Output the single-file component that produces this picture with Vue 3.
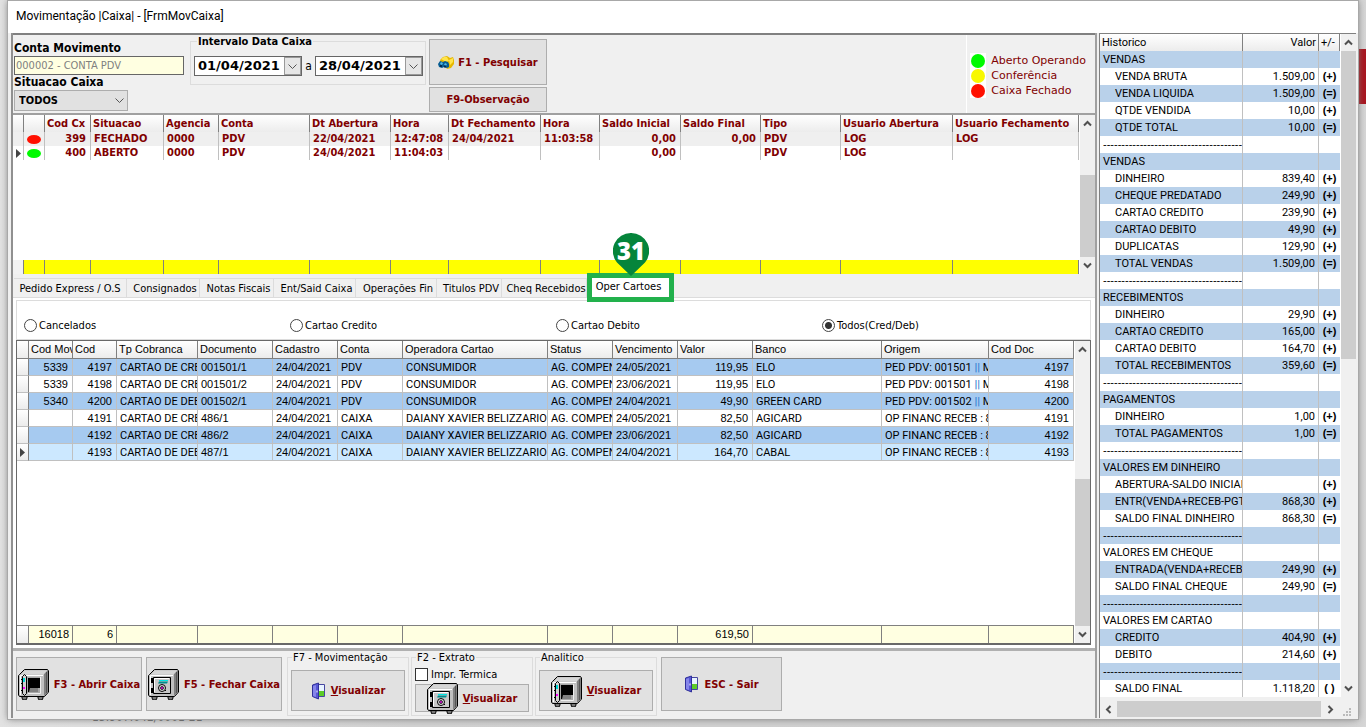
<script setup>
import { ref } from 'vue'

const situacao = ref('TODOS')
const filtro = ref('Todos(Cred/Deb)')
const impressaoTermica = ref(false)

const legenda = [
  { cor: 'verde', texto: 'Aberto Operando' },
  { cor: 'amarelo', texto: 'Conferência' },
  { cor: 'vermelho', texto: 'Caixa Fechado' }
]

const caixaCols = [
  { t: '', w: 11 },
  { t: '', w: 21 },
  { t: 'Cod Cx', w: 46, num: true },
  { t: 'Situacao', w: 73 },
  { t: 'Agencia', w: 55 },
  { t: 'Conta', w: 91 },
  { t: 'Dt Abertura', w: 81 },
  { t: 'Hora', w: 58 },
  { t: 'Dt Fechamento', w: 92 },
  { t: 'Hora', w: 59 },
  { t: 'Saldo Inicial', w: 81, num: true },
  { t: 'Saldo Final', w: 80, num: true },
  { t: 'Tipo', w: 80 },
  { t: 'Usuario Abertura', w: 112 },
  { t: 'Usuario Fechamento', w: 126 }
]
const caixas = [
  { cor: 'vermelho', atual: false, c: ['399', 'FECHADO', '0000', 'PDV', '22/04/2021', '12:47:08', '24/04/2021', '11:03:58', '0,00', '0,00', 'PDV', 'LOG', 'LOG'] },
  { cor: 'verde', atual: true, c: ['400', 'ABERTO', '0000', 'PDV', '24/04/2021', '11:04:03', '', '', '0,00', '', 'PDV', 'LOG', ''] }
]

const abas = [
  { t: 'Pedido Express / O.S', w: 113 },
  { t: 'Consignados', w: 73 },
  { t: 'Notas Fiscais', w: 74 },
  { t: 'Ent/Said Caixa', w: 82 },
  { t: 'Operações Fin', w: 81 },
  { t: 'Titulos PDV', w: 65 },
  { t: 'Cheq Recebidos', w: 85 }
]

const filtros = ['Cancelados', 'Cartao Credito', 'Cartao Debito', 'Todos(Cred/Deb)']

const cartaoCols = [
  { t: '', w: 12, f: '' },
  { t: 'Cod Mov', w: 44, num: true, f: '16018' },
  { t: 'Cod', w: 44, num: true, f: '6' },
  { t: 'Tp Cobranca', w: 81, f: '' },
  { t: 'Documento', w: 75, f: '' },
  { t: 'Cadastro', w: 65, f: '' },
  { t: 'Conta', w: 65, f: '' },
  { t: 'Operadora Cartao', w: 145, f: '' },
  { t: 'Status', w: 65, f: '' },
  { t: 'Vencimento', w: 65, f: '' },
  { t: 'Valor', w: 75, num: true, f: '619,50' },
  { t: 'Banco', w: 129, f: '' },
  { t: 'Origem', w: 107, f: '' },
  { t: 'Cod Doc', w: 85, num: true, f: '' }
]
const cartoes = [
  ['5339', '4197', 'CARTAO DE CREDITO', '001501/1', '24/04/2021', 'PDV', 'CONSUMIDOR', 'AG. COMPENSACAO', '24/05/2021', '119,95', 'ELO', 'PED PDV: 001501 || MOV', '4197'],
  ['5339', '4198', 'CARTAO DE CREDITO', '001501/2', '24/04/2021', 'PDV', 'CONSUMIDOR', 'AG. COMPENSACAO', '23/06/2021', '119,95', 'ELO', 'PED PDV: 001501 || MOV', '4198'],
  ['5340', '4200', 'CARTAO DE DEBITO', '001502/1', '24/04/2021', 'PDV', 'CONSUMIDOR', 'AG. COMPENSACAO', '24/04/2021', '49,90', 'GREEN CARD', 'PED PDV: 001502 || MOV', '4200'],
  ['', '4191', 'CARTAO DE CREDITO', '486/1', '24/04/2021', 'CAIXA', 'DAIANY XAVIER BELIZZARIO', 'AG. COMPENSACAO', '24/05/2021', '82,50', 'AGICARD', 'OP FINANC RECEB : 86', '4191'],
  ['', '4192', 'CARTAO DE CREDITO', '486/2', '24/04/2021', 'CAIXA', 'DAIANY XAVIER BELIZZARIO', 'AG. COMPENSACAO', '23/06/2021', '82,50', 'AGICARD', 'OP FINANC RECEB : 86', '4192'],
  ['', '4193', 'CARTAO DE DEBITO', '487/1', '24/04/2021', 'CAIXA', 'DAIANY XAVIER BELIZZARIO', 'AG. COMPENSACAO', '24/04/2021', '164,70', 'CABAL', 'OP FINANC RECEB : 87', '4193']
]
const textoCols = [2, 5, 6, 7, 10, 11]

const traco = '-'.repeat(60)
const historico = [
  ['VENDAS'],
  ['VENDA BRUTA', '1.509,00', '(+)'],
  ['VENDA LIQUIDA', '1.509,00', '(=)'],
  ['QTDE VENDIDA', '10,00', '(+)'],
  ['QTDE TOTAL', '10,00', '(=)'],
  [traco],
  ['VENDAS'],
  ['DINHEIRO', '839,40', '(+)'],
  ['CHEQUE PREDATADO', '249,90', '(+)'],
  ['CARTAO CREDITO', '239,90', '(+)'],
  ['CARTAO DEBITO', '49,90', '(+)'],
  ['DUPLICATAS', '129,90', '(+)'],
  ['TOTAL VENDAS', '1.509,00', '(=)'],
  [traco],
  ['RECEBIMENTOS'],
  ['DINHEIRO', '29,90', '(+)'],
  ['CARTAO CREDITO', '165,00', '(+)'],
  ['CARTAO DEBITO', '164,70', '(+)'],
  ['TOTAL RECEBIMENTOS', '359,60', '(=)'],
  [traco],
  ['PAGAMENTOS'],
  ['DINHEIRO', '1,00', '(+)'],
  ['TOTAL PAGAMENTOS', '1,00', '(=)'],
  [traco],
  ['VALORES EM DINHEIRO'],
  ['ABERTURA-SALDO INICIAL', '', '(+)'],
  ['ENTR(VENDA+RECEB-PGTO)', '868,30', '(+)'],
  ['SALDO FINAL DINHEIRO', '868,30', '(=)'],
  [traco],
  ['VALORES EM CHEQUE'],
  ['ENTRADA(VENDA+RECEB)', '249,90', '(+)'],
  ['SALDO FINAL CHEQUE', '249,90', '(=)'],
  [traco],
  ['VALORES EM CARTAO'],
  ['CREDITO', '404,90', '(+)'],
  ['DEBITO', '214,60', '(+)'],
  [traco],
  ['SALDO FINAL', '1.118,20', '( )']
]
</script>

<template>
  <div class="desktop">
    <svg width="0" height="0" class="defs" aria-hidden="true">
      <symbol id="cofre" viewBox="0 0 32 32">
        <path d="M4 28h5v2l-1 2H5l-1-2zM20 28h5v2l-1 2h-3l-1-2z" fill="#777" stroke="#000" />
        <path d="M1.500 6.500 6.500 1.500H29.500L30.500 3V24L26.500 28.500H1.500L.5 27V7.500z" fill="#c0c0c0" stroke="#000" />
        <path d="M26 6 30 2V24L26 28z" fill="#808080" />
        <path d="M3 6.500 7 2.500H29L25.500 6.500z" fill="#d6d6d6" />
        <path d="M2.500 27V7.500H25" fill="none" stroke="#fff" />
        <path d="M28.500 4V25" stroke="#555" stroke-width="1" />
      </symbol>
      <symbol id="aberto" viewBox="0 0 32 32">
        <use href="#cofre" />
        <path d="M9 9H23V25H9z" fill="#a8a8a8" />
        <path d="M10 10H22V20H12V24H10z" fill="#000" />
        <path d="M12 20H20V24H11z" fill="#808080" />
        <path d="M22.500 9V25.500H10" fill="none" stroke="#eee" />
        <path d="M4.500 8.500 6.500 6.500 8.500 8.500V25.500L6.500 27.500 4.500 25.500z" fill="#d0d0d0" stroke="#000" />
        <path d="M3 11.500h2M3 15.500h2M3 22.500h2" stroke="#000" />
        <path d="M6 10v4" stroke="#00d8d8" stroke-width="2" />
        <path d="M6 19v2" stroke="#f0f" stroke-width="2" />
      </symbol>
      <symbol id="fechado" viewBox="0 0 32 32">
        <use href="#cofre" />
        <path d="M5.500 9.500H22.500V25.500H5.500z" fill="#c8c8c8" stroke="#000" />
        <path d="M6.500 24V10.500H21" fill="none" stroke="#fff" />
        <path d="M4 10v5M4 20v5" stroke="#000" stroke-width="2" />
        <path d="M11 13.500h9l-1 2h-9z" fill="#008c8c" />
        <path d="M11 12.500h9" stroke="#00e5e5" />
        <circle cx="14" cy="20" r="3.500" fill="#ddd" stroke="#000" />
        <circle cx="14" cy="20" r="1.500" fill="#d0d" stroke="#333" />
        <path d="m17 22 1 1" stroke="#000" />
      </symbol>
      <symbol id="porta" viewBox="0 0 16 18">
        <path d="M6.500 2.500H13.500V14.500H6.500z" fill="#e8f4ff" stroke="#4646a0" />
        <path d="M8 9h5v5H8z" fill="#5ccc28" />
        <path d="M1.500 3 7.500 1V17L1.500 14.500z" fill="#5757d6" stroke="#30309a" />
        <path d="M2 4 5 3V15L2 14z" fill="#8585ea" />
        <path d="M6 8.500v2" stroke="#fff" />
      </symbol>
      <symbol id="pesquisa" viewBox="0 0 16 13">
        <path d="m2 4 3-3 4-1 3 2 3-1 1 3v4l-3 4-4 1-3-4H3z" fill="#e7b800" />
        <path d="m3 3 3-2 3 0 2 4-3 1zM11 4l4-2v4l-3 3z" fill="#ffe44c" />
        <path d="m0 8 2-3 3 1 2-1 3 1 1 2v3l-2 1-3-1-2 1-3-1z" fill="#075c91" />
        <path d="m2 7 2-1 1 2-2 1zM6 8l2-1 1 2-2 1z" fill="#50b9e3" />
        <path d="M2 10h2M6 10.500h2" stroke="#022c50" stroke-width="2" />
      </symbol>
      <symbol id="cima" viewBox="0 0 9 7"><path d="m1 5.500 3.500-3.500L8 5.500" fill="none" stroke="#505050" stroke-width="2" /></symbol>
      <symbol id="baixo" viewBox="0 0 9 7"><path d="m1 1.500 3.500 3.500L8 1.500" fill="none" stroke="#505050" stroke-width="2" /></symbol>
      <symbol id="esq" viewBox="0 0 7 9"><path d="M5.500 1 2 4.500 5.500 8" fill="none" stroke="#505050" stroke-width="2" /></symbol>
      <symbol id="dir" viewBox="0 0 7 9"><path d="M1.500 1 5 4.500 1.500 8" fill="none" stroke="#505050" stroke-width="2" /></symbol>
      <symbol id="seta" viewBox="0 0 5 9"><path d="M0 0 5 4.500 0 9z" fill="#444" /></symbol>
    </svg>

    <div class="fundo-vermelho"></div>
    <div class="fundo-texto">13.907.042/0001-21</div>

    <main class="janela">
      <header class="titulo">Movimentação |Caixa| - [FrmMovCaixa]</header>
      <div class="corpo">
        <div class="esquerda">
          <section class="painel-topo">
            <div class="campos">
              <label for="conta">Conta Movimento</label>
              <input id="conta" class="conta" type="text" value="000002 - CONTA PDV" readonly />
              <label for="situacao">Situacao Caixa</label>
              <div class="combo">
                <select id="situacao" v-model="situacao">
                  <option>TODOS</option>
                  <option>ABERTO</option>
                  <option>FECHADO</option>
                </select>
                <svg width="9" height="7" viewBox="0 0 9 7"><path d="m.5 1.500 4 4 4-4" fill="none" stroke="#555" /></svg>
              </div>
            </div>
            <fieldset class="intervalo">
              <legend>Intervalo Data Caixa</legend>
              <div class="data">
                <input type="text" value="01/04/2021" aria-label="Data inicial" />
                <button type="button" aria-label="Abrir calendário inicial"><svg width="9" height="7" viewBox="0 0 9 7"><path d="m.5 1.500 4 4 4-4" fill="none" stroke="#555" /></svg></button>
              </div>
              <span>a</span>
              <div class="data">
                <input type="text" value="28/04/2021" aria-label="Data final" />
                <button type="button" aria-label="Abrir calendário final"><svg width="9" height="7" viewBox="0 0 9 7"><path d="m.5 1.500 4 4 4-4" fill="none" stroke="#555" /></svg></button>
              </div>
            </fieldset>
            <div class="acoes-topo">
              <button type="button" class="btn f1"><svg width="16" height="13"><use href="#pesquisa" /></svg>F1 - Pesquisar</button>
              <button type="button" class="btn f9">F9-Observação</button>
            </div>
            <ul class="legenda">
              <li v-for="l in legenda" :key="l.cor"><span class="caixa-luz"><i class="luz" :class="l.cor"></i></span>{{ l.texto }}</li>
            </ul>
          </section>

          <section class="grade grade-caixa">
            <table>
              <colgroup><col v-for="(c, i) in caixaCols" :key="i" :style="{ width: c.w + 'px' }" /></colgroup>
              <thead><tr><th v-for="(c, i) in caixaCols" :key="i">{{ c.t }}</th></tr></thead>
              <tbody>
                <tr v-for="(r, i) in caixas" :key="i" :class="{ par: i === 0 }">
                  <td class="ind"><svg v-if="r.atual" width="5" height="9"><use href="#seta" /></svg></td>
                  <td class="estado"><i class="oval" :class="r.cor"></i></td>
                  <td v-for="(v, j) in r.c" :key="j" :class="{ num: caixaCols[j + 2].num }">{{ v }}</td>
                </tr>
                <tr class="vazio"><td colspan="15"></td></tr>
              </tbody>
              <tfoot><tr><td v-for="(c, i) in caixaCols" :key="i"></td></tr></tfoot>
            </table>
            <div class="rolagem">
              <button type="button" aria-label="Subir"><svg width="9" height="7"><use href="#cima" /></svg></button>
              <div class="trilho fim"><div class="polegar p1"></div></div>
              <button type="button" aria-label="Descer"><svg width="9" height="7"><use href="#baixo" /></svg></button>
            </div>
          </section>

          <nav class="abas" role="tablist">
            <button v-for="a in abas" :key="a.t" type="button" role="tab" class="aba" :style="{ width: a.w + 'px' }">{{ a.t }}</button>
            <button type="button" role="tab" aria-selected="true" class="aba ativa">
              Oper Cartoes
              <svg class="pino" width="36" height="44" viewBox="0 0 36 44">
                <path d="M18 0A18 18 0 0 1 32 29.500L18 43 4 29.500A18 18 0 0 1 18 0z" fill="#05853b" />
                <text x="18" y="27" text-anchor="middle" fill="#fff">31</text>
              </svg>
            </button>
          </nav>

          <section class="pagina">
            <div class="filtros">
              <label v-for="f in filtros" :key="f"><input v-model="filtro" type="radio" name="filtro" :value="f" />{{ f }}</label>
            </div>
            <div class="grade grade-cartao">
              <table>
                <colgroup><col v-for="(c, i) in cartaoCols" :key="i" :style="{ width: c.w + 'px' }" /></colgroup>
                <thead><tr><th v-for="(c, i) in cartaoCols" :key="i">{{ c.t }}</th></tr></thead>
                <tbody>
                  <tr v-for="(r, i) in cartoes" :key="i" :class="{ azul: i % 2 === 0, sel: i === 5 }">
                    <td class="ind"><svg v-if="i === 5" width="5" height="9"><use href="#seta" /></svg></td>
                    <td v-for="(v, j) in r" :key="j" :class="{ num: cartaoCols[j + 1].num, texto: textoCols.includes(j) }">
                      <template v-for="(parte, k) in v.split(/(\|\|)/)" :key="k"><span :class="{ barra: parte === '||' }">{{ parte }}</span></template>
                    </td>
                  </tr>
                  <tr class="vazio"><td colspan="14"></td></tr>
                </tbody>
                <tfoot><tr><td v-for="(c, i) in cartaoCols" :key="i" :class="{ ind: i === 0 }">{{ c.f }}</td></tr></tfoot>
              </table>
              <div class="rolagem">
                <button type="button" aria-label="Subir"><svg width="9" height="7"><use href="#cima" /></svg></button>
                <div class="trilho fim"><div class="polegar p2"></div></div>
                <button type="button" aria-label="Descer"><svg width="9" height="7"><use href="#baixo" /></svg></button>
              </div>
            </div>
          </section>

          <footer class="rodape">
            <button type="button" class="btn f3"><svg width="32" height="32"><use href="#aberto" /></svg>F3 - Abrir Caixa</button>
            <button type="button" class="btn f5"><svg width="32" height="32"><use href="#fechado" /></svg>F5 - Fechar Caixa</button>
            <div class="grupos">
              <fieldset class="grupo">
                <legend>F7 - Movimentação</legend>
                <button type="button" class="btn"><svg width="16" height="18"><use href="#porta" /></svg><span><u>V</u>isualizar</span></button>
              </fieldset>
              <fieldset class="grupo">
                <legend>F2 - Extrato</legend>
                <label class="termica"><input v-model="impressaoTermica" type="checkbox" />Impr. Termica</label>
                <button type="button" class="btn baixo"><svg width="32" height="32"><use href="#fechado" /></svg><span><u>V</u>isualizar</span></button>
              </fieldset>
              <fieldset class="grupo">
                <legend>Analitico</legend>
                <button type="button" class="btn"><svg width="32" height="32"><use href="#aberto" /></svg><span><u>V</u>isualizar</span></button>
              </fieldset>
            </div>
            <button type="button" class="btn sair"><svg width="16" height="18"><use href="#porta" /></svg>ESC - Sair</button>
          </footer>
        </div>

        <aside class="direita">
          <div class="grade-hist">
            <table>
              <colgroup><col class="h1" /><col class="h2" /><col class="h3" /></colgroup>
              <thead><tr><th>Historico</th><th class="num">Valor</th><th>+/-</th></tr></thead>
              <tbody>
                <tr v-for="(h, i) in historico" :key="i" :class="{ azul: i % 2 === 0 }">
                  <td :class="{ item: h.length > 1, traco: h[0] === traco }">{{ h[0] }}</td>
                  <td class="num">{{ h[1] }}</td>
                  <td class="sinal">{{ h[2] }}</td>
                </tr>
              </tbody>
            </table>
            <div class="rolagem">
              <button type="button" aria-label="Subir"><svg width="9" height="7"><use href="#cima" /></svg></button>
              <div class="trilho"><div class="polegar p3"></div></div>
              <button type="button" aria-label="Descer"><svg width="9" height="7"><use href="#baixo" /></svg></button>
            </div>
          </div>
          <div class="rolagem-h">
            <button type="button" aria-label="Esquerda"><svg width="7" height="9"><use href="#esq" /></svg></button>
            <div class="trilho-h"><div class="polegar"></div></div>
            <button type="button" aria-label="Direita"><svg width="7" height="9"><use href="#dir" /></svg></button>
            <svg class="alca" width="9" height="9" viewBox="0 0 9 9"><path d="M6 0h2v2H6zM3 3h2v2H3zM6 3h2v2H6zM0 6h2v2H0zM3 6h2v2H3zM6 6h2v2H6z" fill="#bbb" /></svg>
          </div>
        </aside>
      </div>
    </main>
  </div>
</template>

<style>
html, body { margin: 0; background: #d4d4d4; }
</style>

<style scoped>
.desktop {
  position: relative;
  box-sizing: border-box;
  min-height: 100vh;
  display: flex;
  padding: 1px 8px 8px;
  background: linear-gradient(90deg, #e2e2e2, #d2d2d2 30%, #cfcfcf 98%, #d6d6d6);
  font-family: "DejaVu Sans Condensed", "Noto Sans", sans-serif;
  font-size: 11px;
  color: #000;
  overflow: hidden;
}
.defs { position: absolute; }
.fundo-vermelho { position: absolute; right: 0; top: 49px; width: 8px; height: 55px; background: #a8141e; }
.fundo-texto { position: absolute; left: 92px; bottom: 3px; font-size: 12px; line-height: 14px; color: #666; }
.janela {
  position: relative;
  flex: 1;
  min-width: 0;
  display: flex;
  flex-direction: column;
  background: #f0f0f0;
  outline: 1px solid #a8a8a8;
  box-shadow: 0 0 7px #777;
}
.titulo {
  height: 32px;
  box-sizing: border-box;
  padding: 0 8px;
  line-height: 30px;
  font-family: Roboto, sans-serif;
  font-size: 12px;
  background: #fff;
}
.corpo { flex: 1; display: flex; gap: 2px; padding: 0 2px 1px 3px; }
.esquerda { flex: 1; min-width: 0; display: flex; flex-direction: column; border-left: 2px solid #909090; border-right: 2px solid #a0a0a0; }
button, input, select { font: inherit; color: inherit; margin: 0; }
fieldset { margin: 0; min-width: 0; box-sizing: border-box; border: 1px solid #dcdcdc; }
svg { flex: none; display: block; }

.painel-topo {
  display: flex;
  height: 82px;
  box-sizing: border-box;
  border-top: 2px solid #808080;
  border-bottom: 2px solid #a0a0a0;
  padding-left: 1px;
}
.campos { width: 170px; padding-top: 6px; margin-right: 6px; font-weight: bold; font-size: 12px; }
.campos label { display: block; line-height: 15px; }
.conta {
  display: block;
  box-sizing: border-box;
  width: 100%;
  height: 19px;
  padding: 0 1px;
  border: 1px solid #666;
  background: #ffffe1;
  color: #808080;
  font-weight: normal;
  font-size: 11px;
}
.combo { position: relative; width: 114px; }
.combo select {
  display: block;
  appearance: none;
  box-sizing: border-box;
  width: 100%;
  height: 21px;
  padding: 0 4px;
  border: 1px solid #adadad;
  border-radius: 0;
  background: #e1e1e1;
  font-size: 11px;
  font-weight: bold;
}
.combo svg { position: absolute; right: 4px; top: 7px; pointer-events: none; }
.intervalo {
  position: relative;
  width: 236px;
  height: 44px;
  margin: 6px 3px 0 0;
  padding: 14px 2px 0 3px;
  display: flex;
  align-items: flex-start;
  justify-content: space-between;
}
.intervalo legend { position: absolute; top: -7px; left: 6px; padding: 0 1px; line-height: 14px; font-size: 11px; font-weight: bold; background: #f0f0f0; }
.intervalo span { line-height: 20px; font-size: 12px; }
.data { display: flex; box-sizing: border-box; width: 108px; height: 20px; border: 1px solid #666; background: #fff; }
.data input { flex: 1; min-width: 0; padding: 0 0 0 3px; border: 0; background: none; font-family: "DejaVu Sans", sans-serif; font-size: 13px; line-height: 16px; font-weight: bold; }
.data button { width: 17px; padding: 0; border: 1px solid #999; background: #e6e6e6; display: grid; place-items: center; }
.acoes-topo { width: 118px; display: flex; flex-direction: column; gap: 2px; padding-top: 4px; }
.btn {
  box-sizing: border-box;
  display: flex;
  align-items: center;
  justify-content: center;
  gap: 4px;
  padding: 0;
  border: 1px solid #adadad;
  background: #e1e1e1;
  color: #800000;
  font-size: 11px;
  font-weight: bold;
  white-space: nowrap;
}
.f1 { height: 46px; }
.f9 { height: 25px; }
.legenda {
  list-style: none;
  margin: 0 0 0 auto;
  padding: 18px 9px 0 3px;
  border-left: 1px solid #fff;
  font-family: "DejaVu Sans", sans-serif;
  font-size: 11px;
  color: #800000;
}
.legenda li { display: flex; align-items: center; height: 15px; line-height: 18px; gap: 5px; }
.caixa-luz { width: 16px; height: 15px; background: #fff; display: grid; place-items: center; }
.luz { width: 14px; height: 14px; border-radius: 50%; }
.verde { background: #00fa00; }
.amarelo { background: #f8f800; }
.vermelho { background: #ff1000; }

.grade { display: flex; background: #fff; }
.grade table, .grade-hist table { flex: 1; min-width: 0; width: 100%; table-layout: fixed; border-collapse: separate; border-spacing: 0; }
th, td { box-sizing: border-box; padding: 0 2px; overflow: hidden; white-space: nowrap; text-align: left; }
th { background: linear-gradient(#fff, #ececec); font-weight: inherit; }
.num { text-align: right; }
.grade table { height: 100%; }
.grade .vazio { height: 100%; }
.grade .vazio td { height: auto; border: 0; }

.grade-caixa { height: 159px; color: #800000; font-weight: bold; }
.grade-caixa table { height: 159px; }
.grade-caixa th { height: 17px; line-height: 17px; border-right: 1px solid #808080; }
.grade-caixa td { height: 14px; line-height: 14px; border-right: 1px solid #c0c0c0; padding: 0 3px; }
.grade-caixa td.num { padding-right: 4px; }
.grade-caixa .par td { background: #efefef; }
.grade-caixa tfoot td { background: #ff0; border-right-color: #808080; }
.grade-caixa tfoot td:first-child { background: #f2f2f2; }
.grade-caixa td.ind, .grade-caixa td.estado { padding: 0 0 0 3px; }
.oval { display: block; width: 14px; height: 9px; border-radius: 50%; }

.rolagem { width: 15px; margin: 0 0 0 1px; display: flex; flex-direction: column; background: #f0f0f0; }
.rolagem button, .rolagem-h button { border: 0; padding: 0; background: #f0f0f0; display: grid; place-items: center; }
.rolagem button { height: 17px; }
.trilho { flex: 1; display: flex; flex-direction: column; }
.fim { justify-content: flex-end; }
.polegar { background: #cdcdcd; }
.p1 { height: 66%; }
.p2 { height: 55%; }
.p3 { height: 49%; }

.abas { position: relative; display: flex; align-items: flex-end; height: 24px; box-sizing: border-box; padding-left: 1px; border-bottom: 1px solid #dcdcdc; }
.aba {
  box-sizing: border-box;
  height: 19px;
  padding: 0 0 0 4px;
  border: 1px solid #dcdcdc;
  border-width: 1px 1px 0 0;
  background: #f0f0f0;
  text-align: center;
  white-space: nowrap;
}
.aba:first-child { padding: 0; }
.aba.ativa { position: relative; width: 87px; height: 29px; margin: 0 0 -5px; padding: 0 4px 3px 0; border: 5px solid #22b14c; background: #fff; z-index: 1; }
.pino { position: absolute; left: 21px; bottom: 20px; font: 800 24px "Open Sans", sans-serif; }

.pagina { flex: 1; display: flex; flex-direction: column; padding: 2px 4px 3px 3px; background: #fff; border-bottom: 3px solid #b0b0b0; }
.filtros { display: grid; grid-template-columns: repeat(4, 1fr); align-items: center; height: 40px; box-sizing: border-box; padding: 10px 2px 0 7px; border: 1px solid #dcdcdc; }
.filtros label { display: flex; align-items: center; gap: 2px; }
input[type="radio"] { appearance: none; box-sizing: border-box; width: 13px; height: 13px; border: 1px solid #444; border-radius: 50%; background: #fff; }
input[type="radio"]:checked { background: radial-gradient(circle, #333 0 3px, #fff 4px); }
input[type="checkbox"] { appearance: none; box-sizing: border-box; width: 13px; height: 13px; border: 1px solid #333; background: #fff; }

.grade-cartao { flex: 1; border: 1px solid #696969; border-bottom-width: 2px; font-family: "Liberation Sans", sans-serif; font-size: 11px; }
.grade-cartao th { height: 18px; line-height: 15px; border-right: 1px solid #808080; border-bottom: 1px solid #808080; }
.grade-cartao td { height: 17px; line-height: 14px; border-right: 1px solid #c0c0c0; border-bottom: 1px solid #c0c0c0; padding: 1px 3px 0; vertical-align: baseline; }
.grade-cartao td.num { padding-right: 4px; }
.grade-cartao .azul td { background: #a6caf0; }
.grade-cartao .sel td { background: #cce8ff; }
.grade-cartao .texto { font-family: Roboto, sans-serif; }
.barra { color: #2f7fd0; font-weight: bold; }
.grade-cartao td.ind { background: linear-gradient(#fff, #ececec); border-right-color: #808080; vertical-align: middle; }
.grade-cartao tfoot td { height: 18px; background: #ffffe1; border-color: #808080; border-top: 1px solid #808080; border-bottom: 0; text-align: right; }

.rodape { display: flex; gap: 4px; height: 67px; box-sizing: border-box; padding: 6px 3px 2px; }
.rodape > .btn { height: 54px; }
.f3 { width: 126px; }
.f5 { width: 136px; }
.sair { width: 121px; }
.grupos { display: flex; gap: 2px; padding-left: 1px; }
.grupo { position: relative; width: 122px; height: 59px; padding: 12px 3px 0; display: flex; flex-direction: column; }
.grupo legend { position: absolute; top: -7px; left: 4px; padding: 0 1px; line-height: 14px; background: #f0f0f0; }
.grupo .btn { height: 41px; }
.grupo .baixo { position: relative; height: 28px; }
.termica { display: flex; align-items: center; gap: 3px; height: 14px; margin-top: -3px; margin-bottom: 3px; }

.direita { width: 257px; display: flex; flex-direction: column; border-left: 1px solid #808080; border-top: 1px solid #808080; box-sizing: border-box; }
.grade-hist { display: flex; font-family: Roboto, sans-serif; font-size: 11px; background: #fff; }
.h1 { width: 143px; }
.h2 { width: 76px; }
.h3 { width: 21px; }
.grade-hist th { height: 17px; border-right: 1px solid #808080; }
.grade-hist td { height: 17px; line-height: 17px; border-right: 1px solid #c0c0c0; padding: 0 3px; }
.grade-hist td:last-child { border-right: 0; }
.grade-hist .azul td { background: #b9d1ea; }
.grade-hist td.item { padding-left: 15px; }
.grade-hist td.traco { padding-right: 0; font-family: "Liberation Sans", sans-serif; }
.grade-hist td.sinal { text-align: center; font-family: "Liberation Sans", sans-serif; font-weight: bold; font-size: 11px; padding: 0; }
.rolagem-h { margin-top: 4px; height: 16px; display: flex; background: #f0f0f0; }
.rolagem-h button { width: 17px; }
.trilho-h { flex: 1; display: flex; }
.trilho-h .polegar { flex: 1; margin-right: 1px; }
.alca { width: 17px; align-self: flex-end; }
</style>
